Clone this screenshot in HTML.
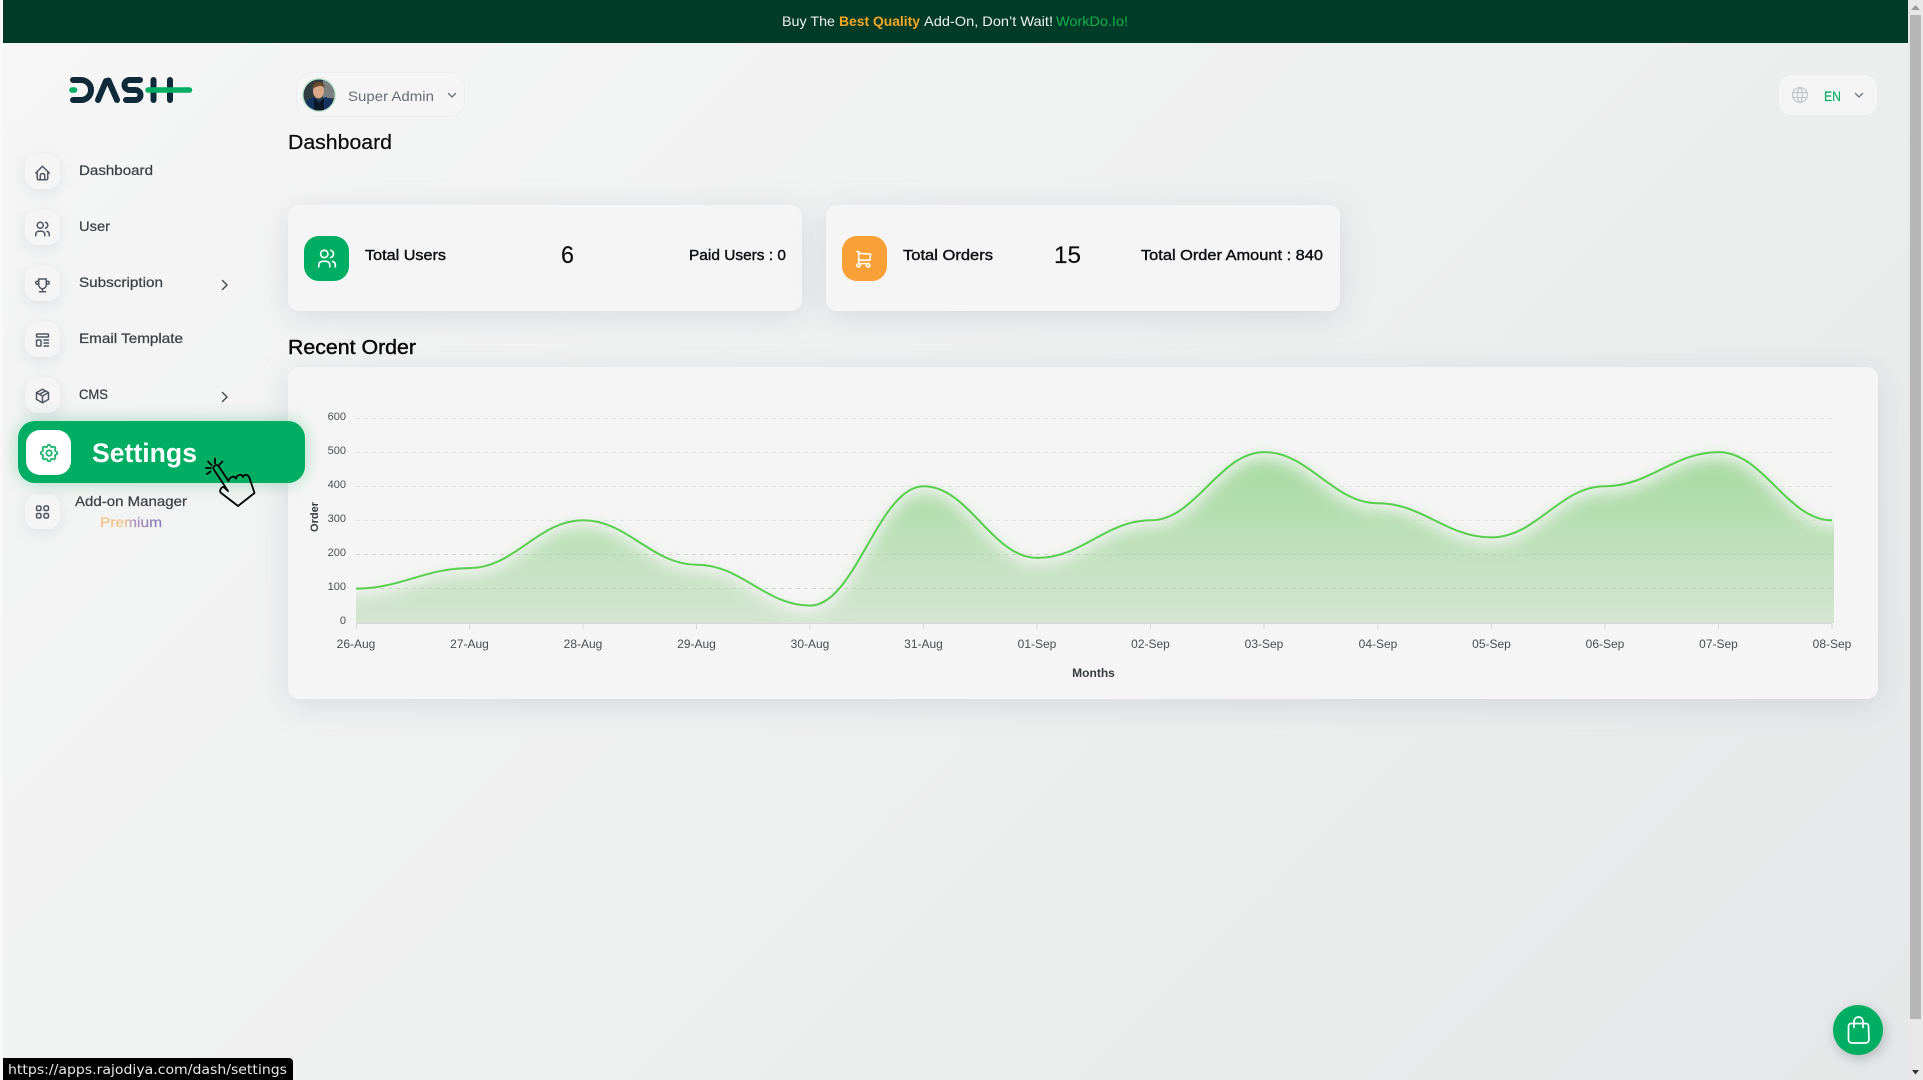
<!DOCTYPE html>
<html lang="en"><head><meta charset="utf-8"><title>Dashboard</title>
<style>
html,body{margin:0;padding:0;width:1923px;height:1080px;overflow:hidden;background:#f8f8f8;font-family:"Liberation Sans",sans-serif}
.b{position:absolute;box-sizing:border-box}
#bg{left:3px;top:0;width:1905px;height:1080px;background:linear-gradient(135deg,#f6f6f6 0%,#eeefef 55%,#e5e8e8 100%)}
#top{left:3px;top:0;width:1905px;height:43px;background:#003b28}
.ib{left:25px;width:35px;height:35px;border-radius:12px;background:#f5f5f6;box-shadow:0 4px 14px rgba(165,170,182,.25)}
.card{background:#f5f5f5;border-radius:11px;box-shadow:0 6px 30px rgba(150,156,168,.28)}
svg text{font-family:"Liberation Sans",sans-serif}
.nav{font-size:14px;fill:#3d4146;stroke:#3d4146;stroke-width:.25px}
.semi{font-size:15px;fill:#0d0f12;stroke:#0d0f12;stroke-width:.4px}
.big{font-size:24px;fill:#0a0a0a;stroke:#0a0a0a;stroke-width:.15px}
.yl{font-size:11px;fill:#4a4e50;text-anchor:end}
.xl{font-size:12px;fill:#4a4e50;text-anchor:middle}
.ic{fill:none;stroke-linecap:round;stroke-linejoin:round;stroke-width:2}
</style></head>
<body>
<div class="b" id="bg"></div>
<div class="b" id="top"></div>
<div class="b" style="left:1908px;top:0;width:15px;height:1080px;background:#e8e8e8"></div>
<div class="b" style="left:1910px;top:15px;width:11px;height:1004px;background:#b6b6b6"></div>

<div class="b ib" style="top:154px"></div>
<div class="b ib" style="top:210px"></div>
<div class="b ib" style="top:266px"></div>
<div class="b ib" style="top:322px"></div>
<div class="b ib" style="top:378px"></div>
<div class="b ib" style="top:494px"></div>

<div class="b" style="left:296px;top:72px;width:169px;height:45px;border-radius:15px;background:#f5f5f5;border:1px solid #eeeeee"></div>
<div class="b" style="left:1779px;top:75px;width:98px;height:40px;border-radius:13px;background:#f5f5f5"></div>

<div class="b card" style="left:288px;top:205px;width:514px;height:106px"></div>
<div class="b card" style="left:826px;top:205px;width:514px;height:106px"></div>
<div class="b" style="left:304px;top:236px;width:45px;height:45px;border-radius:15px;background:#00ae63"></div>
<div class="b" style="left:842px;top:236px;width:45px;height:45px;border-radius:15px;background:#f9a036"></div>
<div class="b card" style="left:288px;top:367px;width:1590px;height:332px"></div>

<div class="b" style="left:18px;top:421px;width:287px;height:62px;border-radius:17px;background:#00ae63;box-shadow:0 0 18px rgba(0,174,99,.32)"></div>
<div class="b" style="left:26px;top:430px;width:45px;height:45px;border-radius:14px;background:#fff"></div>

<div class="b" style="left:1833px;top:1005px;width:50px;height:50px;border-radius:50%;background:#00ae63;box-shadow:2px 4px 12px rgba(90,100,100,.35)"></div>
<div class="b" style="left:3px;top:1058px;width:290px;height:22px;background:#000;border-top-right-radius:4px"></div>

<svg class="b" style="left:0;top:0" width="1923" height="1080" viewBox="0 0 1923 1080" xmlns="http://www.w3.org/2000/svg">
<defs>
<linearGradient id="fg" gradientUnits="userSpaceOnUse" x1="0" y1="452" x2="0" y2="623">
<stop offset="0" stop-color="#a6daa0"/><stop offset="1" stop-color="#d6e6d3"/>
</linearGradient>
<filter id="bl" filterUnits="userSpaceOnUse" x="300" y="400" width="1600" height="300"><feGaussianBlur stdDeviation="8"/></filter>
<clipPath id="cp"><rect x="356" y="420" width="1478" height="203"/></clipPath>
<g id="i-users"><circle cx="9" cy="7" r="4"/><path d="M3 21v-2a4 4 0 0 1 4-4h4a4 4 0 0 1 4 4v2"/><path d="M16 3.13a4 4 0 0 1 0 7.75"/><path d="M21 21v-2a4 4 0 0 0-3-3.85"/></g>
<g id="i-cart"><circle cx="6" cy="19" r="2"/><circle cx="17" cy="19" r="2"/><path d="M17 17h-11v-14h-2"/><path d="M6 5l14 1l-1 7h-13"/></g>
</defs>

<!-- banner -->
<text x="782" y="26" font-size="14" fill="#f0f0f0" textLength="53" lengthAdjust="spacingAndGlyphs">Buy The</text>
<text x="839" y="26" font-size="14" font-weight="bold" fill="#f5a623" textLength="81" lengthAdjust="spacingAndGlyphs">Best Quality</text>
<text x="924" y="26" font-size="14" fill="#f0f0f0" textLength="129" lengthAdjust="spacingAndGlyphs">Add-On, Don’t Wait!</text>
<text x="1056" y="26" font-size="14" fill="#12b04c" textLength="72" lengthAdjust="spacingAndGlyphs">WorkDo.Io!</text>

<!-- scrollbar arrows -->
<path d="M1911 10l4.500-5 4.500 5z" fill="#9a9a9a"/>
<path d="M1912 1070h7l-3.500 4.500z" fill="#333"/>

<!-- logo -->
<g fill="none" stroke="#0f2b3a" stroke-width="6" stroke-linecap="round" stroke-linejoin="round">
<path d="M73 80H81a10 10 0 0 1 0 20H73"/>
<path d="M98 100L106 81"/>
<path d="M108.500 80.500L117 100"/>
<path d="M140 80H129.500a5 5 0 0 0 0 10H135.500a5 5 0 0 1 0 10H126"/>
<path d="M153.500 80V100M170 80V100"/>
</g>
<path d="M72 90H74.500M148 90H189.500" stroke="#00ae63" stroke-width="5.500" stroke-linecap="round" fill="none"/>

<!-- sidebar icons -->
<g class="ic" stroke="#4f5663" style="stroke-width:2">
<g transform="translate(33.500 164) scale(.75)"><path d="M5 12h-2l9-9l9 9h-2"/><path d="M5 12v7a2 2 0 0 0 2 2h10a2 2 0 0 0 2-2v-7"/><path d="M9 21v-6a2 2 0 0 1 2-2h2a2 2 0 0 1 2 2v6"/></g>
<g transform="translate(33.500 220) scale(.75)"><use href="#i-users"/></g>
<g transform="translate(33.500 276) scale(.75)"><path d="M8 21h8M12 17v4M7 4h10"/><path d="M17 4v8a5 5 0 0 1-10 0v-8"/><circle cx="5" cy="9" r="2"/><circle cx="19" cy="9" r="2"/></g>
<g transform="translate(33.500 331) scale(.75)"><rect x="4" y="4" width="16" height="4" rx="1"/><rect x="4" y="12" width="6" height="8" rx="1"/><path d="M14 12h6M14 16h6M14 20h6"/></g>
<g transform="translate(33.500 387) scale(.75)"><path d="M12 3l8 4.500v9l-8 4.500l-8-4.500v-9z"/><path d="M12 12l8-4.500M12 12v9M12 12l-8-4.500M16 5.250l-8 4.500"/></g>
<g transform="translate(33.500 503) scale(.75)"><rect x="4" y="4" width="6" height="6" rx="2"/><rect x="14" y="4" width="6" height="6" rx="2"/><rect x="4" y="14" width="6" height="6" rx="2"/><rect x="14" y="14" width="6" height="6" rx="2"/></g>
</g>
<g transform="translate(38 442) scale(.92)" class="ic" stroke="#22b573"><path d="M10.325 4.317c.426-1.756 2.924-1.756 3.350 0a1.724 1.724 0 0 0 2.573 1.066c1.543-.94 3.310.826 2.370 2.370a1.724 1.724 0 0 0 1.065 2.572c1.756.426 1.756 2.924 0 3.350a1.724 1.724 0 0 0-1.066 2.573c.94 1.543-.826 3.310-2.370 2.370a1.724 1.724 0 0 0-2.572 1.065c-.426 1.756-2.924 1.756-3.350 0a1.724 1.724 0 0 0-2.573-1.066c-1.543.94-3.310-.826-2.370-2.370a1.724 1.724 0 0 0-1.065-2.572c-1.756-.426-1.756-2.924 0-3.350a1.724 1.724 0 0 0 1.066-2.573c-.94-1.543.826-3.310 2.370-2.370c1 .608 2.296.07 2.572-1.065z"/><circle cx="12" cy="12" r="3"/></g>

<!-- nav labels -->
<text class="nav" x="79" y="175" textLength="74" lengthAdjust="spacingAndGlyphs">Dashboard</text>
<text class="nav" x="79" y="231" textLength="31" lengthAdjust="spacingAndGlyphs">User</text>
<text class="nav" x="79" y="287" textLength="84" lengthAdjust="spacingAndGlyphs">Subscription</text>
<text class="nav" x="79" y="343" textLength="104" lengthAdjust="spacingAndGlyphs">Email Template</text>
<text class="nav" x="79" y="399" textLength="29" lengthAdjust="spacingAndGlyphs">CMS</text>
<text class="nav" x="75" y="506" textLength="112" lengthAdjust="spacingAndGlyphs">Add-on Manager</text>
<defs><linearGradient id="pg" gradientUnits="userSpaceOnUse" x1="100" y1="0" x2="162" y2="0"><stop offset="0" stop-color="#fbbf80"/><stop offset=".4" stop-color="#f2c28c"/><stop offset=".55" stop-color="#a68fc0"/><stop offset="1" stop-color="#8a78b4"/></linearGradient></defs>
<text x="100" y="527" font-size="14" fill="url(#pg)" stroke="url(#pg)" stroke-width=".2" textLength="62" lengthAdjust="spacingAndGlyphs">Premium</text>
<path d="M222.500 280.500l4.500 4.500l-4.500 4.500M222.500 392.500l4.500 4.500l-4.500 4.500" fill="none" stroke="#3f4550" stroke-width="1.400" stroke-linecap="round" stroke-linejoin="round"/>

<text x="92" y="462" font-size="27" font-weight="bold" fill="#fff" textLength="105" lengthAdjust="spacingAndGlyphs">Settings</text>

<!-- header -->
<circle cx="319" cy="95" r="17" fill="#bfe6cf"/>
<clipPath id="av"><circle cx="319" cy="95" r="15.500"/></clipPath>
<g clip-path="url(#av)">
<rect x="300" y="78" width="38" height="36" fill="#2f3d42"/>
<rect x="323" y="78" width="15" height="20" fill="#7a8281"/>
<path d="M302 114c0-12 7-16 12-17l5 4 6-4c6 1 11 6 11 17z" fill="#14335f"/>
<path d="M314 98l5 5 5-5v14h-10z" fill="#0b1726"/>
<ellipse cx="318.500" cy="91" rx="5.500" ry="7.500" fill="#d8a888"/>
<path d="M312.500 89c0-5 3-7 6.500-7s6 2.500 6 6c-2-2.500-7-3-12.500 1z" fill="#6b4a2c"/>
</g>
<text x="348" y="101" font-size="14" fill="#666e79" textLength="86" lengthAdjust="spacingAndGlyphs">Super Admin</text>
<path d="M448.500 93.500l3.500 3.500l3.500-3.500" fill="none" stroke="#666e79" stroke-width="1.300" stroke-linecap="round" stroke-linejoin="round"/>

<g transform="translate(1790 85) scale(.83)" class="ic" stroke="#c4c6c8" style="stroke-width:1.500"><circle cx="12" cy="12" r="9"/><path d="M3.600 9h16.800M3.600 15h16.800M11.500 3a17 17 0 0 0 0 18M12.500 3a17 17 0 0 1 0 18"/></g>
<text x="1824" y="101" font-size="14" fill="#00ae63" stroke="#00ae63" stroke-width=".15" textLength="17" lengthAdjust="spacingAndGlyphs">EN</text>
<path d="M1855.500 93.500l3.500 3.500l3.500-3.500" fill="none" stroke="#6b7280" stroke-width="1.300" stroke-linecap="round" stroke-linejoin="round"/>

<text x="288" y="149" font-size="20" fill="#0a0a0a" stroke="#0a0a0a" stroke-width=".2" textLength="104" lengthAdjust="spacingAndGlyphs">Dashboard</text>
<text x="288" y="354" font-size="20" fill="#0a0a0a" stroke="#0a0a0a" stroke-width=".45" textLength="128" lengthAdjust="spacingAndGlyphs">Recent Order</text>

<!-- cards -->
<g transform="translate(316 247.500) scale(.92)" class="ic" stroke="#fff" style="stroke-width:1.800"><use href="#i-users"/></g>
<g transform="translate(853.500 249) scale(.86)" class="ic" stroke="#fff" style="stroke-width:1.800"><use href="#i-cart"/></g>
<text class="semi" x="365" y="260" textLength="81" lengthAdjust="spacingAndGlyphs">Total Users</text>
<text class="big" x="561" y="263" textLength="13" lengthAdjust="spacingAndGlyphs">6</text>
<text class="semi" x="689" y="260" textLength="97" lengthAdjust="spacingAndGlyphs">Paid Users : 0</text>
<text class="semi" x="903" y="260" textLength="90" lengthAdjust="spacingAndGlyphs">Total Orders</text>
<text class="big" x="1054" y="263" textLength="27" lengthAdjust="spacingAndGlyphs">15</text>
<text class="semi" x="1141" y="260" textLength="182" lengthAdjust="spacingAndGlyphs">Total Order Amount : 840</text>

<!-- chart -->
<g stroke="#e2e2e2" stroke-width="1" stroke-dasharray="4 4" fill="none">
<path d="M356 418.500H1832M356 452.500H1832M356 486.500H1832M356 520.500H1832M356 554.500H1832M356 588.500H1832"/>
</g>
<g clip-path="url(#cp)">
<path transform="translate(0 6)" filter="url(#bl)" fill="url(#fg)" d="M356 588.600C401 588.600 424.500 568.100 469.500 568.100C514.500 568.100 538.100 520.300 583.100 520.300C628.100 520.300 651.600 564.700 696.600 564.700C741.600 564.700 765.200 605.600 810.200 605.600C855.200 605.600 878.700 486.200 923.700 486.200C968.700 486.200 992.200 557.900 1037.200 557.900C1082.200 557.900 1105.800 520.300 1150.800 520.300C1195.800 520.300 1219.300 452.100 1264.300 452.100C1309.300 452.100 1332.900 503.300 1377.900 503.300C1422.900 503.300 1446.400 537.400 1491.400 537.400C1536.400 537.400 1559.900 486.200 1604.900 486.200C1649.900 486.200 1673.500 452.100 1718.500 452.100C1763.500 452.100 1787 520.300 1832 520.300L1870 520V670H320V588.600Z"/>
</g>
<g stroke="#000" stroke-opacity=".06" stroke-width="1" stroke-dasharray="4 4" fill="none"><path d="M356 554.500H1832M356 588.500H1832"/></g>
<path fill="none" stroke="#58cd4e" stroke-width="2" d="M356 588.600C401 588.600 424.500 568.100 469.500 568.100C514.500 568.100 538.100 520.300 583.100 520.300C628.100 520.300 651.600 564.700 696.600 564.700C741.600 564.700 765.200 605.600 810.200 605.600C855.200 605.600 878.700 486.200 923.700 486.200C968.700 486.200 992.200 557.900 1037.200 557.900C1082.200 557.900 1105.800 520.300 1150.800 520.300C1195.800 520.300 1219.300 452.100 1264.300 452.100C1309.300 452.100 1332.900 503.300 1377.900 503.300C1422.900 503.300 1446.400 537.400 1491.400 537.400C1536.400 537.400 1559.900 486.200 1604.900 486.200C1649.900 486.200 1673.500 452.100 1718.500 452.100C1763.500 452.100 1787 520.300 1832 520.300"/>
<path d="M356 623.500H1832M356.500 623V629M469.500 623V629M583 623V629M696.500 623V629M810 623V629M923.500 623V629M1037 623V629M1150.500 623V629M1264 623V629M1378 623V629M1491.500 623V629M1605 623V629M1718.500 623V629M1832 623V629" stroke="#d8d8d8" fill="none"/>
<text class="yl" x="346" y="420">600</text>
<text class="yl" x="346" y="454">500</text>
<text class="yl" x="346" y="488">400</text>
<text class="yl" x="346" y="522">300</text>
<text class="yl" x="346" y="556">200</text>
<text class="yl" x="346" y="590">100</text>
<text class="yl" x="346" y="624">0</text>
<g class="xl">
<text class="xl" x="356" y="648">26-Aug</text>
<text class="xl" x="469.500" y="648">27-Aug</text>
<text class="xl" x="583" y="648">28-Aug</text>
<text class="xl" x="696.500" y="648">29-Aug</text>
<text class="xl" x="810" y="648">30-Aug</text>
<text class="xl" x="923.500" y="648">31-Aug</text>
<text class="xl" x="1037" y="648">01-Sep</text>
<text class="xl" x="1150.500" y="648">02-Sep</text>
<text class="xl" x="1264" y="648">03-Sep</text>
<text class="xl" x="1378" y="648">04-Sep</text>
<text class="xl" x="1491.500" y="648">05-Sep</text>
<text class="xl" x="1605" y="648">06-Sep</text>
<text class="xl" x="1718.500" y="648">07-Sep</text>
<text class="xl" x="1832" y="648">08-Sep</text>
</g>
<text x="1093.500" y="677" font-size="12" font-weight="bold" fill="#373d3f" text-anchor="middle">Months</text>
<text transform="translate(318 517) rotate(-90)" font-size="11" font-weight="bold" fill="#373d3f" text-anchor="middle">Order</text>

<!-- hand cursor -->
<g fill="none" stroke="#000" stroke-width="1.800" stroke-linecap="round" stroke-linejoin="round">
<path d="M213.500 469c-1-3 3-5 5-3L228.500 481c1-4 6-6 7.500-2.500c1-3.500 5.500-5.500 7-1.500c1.500-3 5-3 6.500 1C251 483 253 488 254.500 493L238 506L220.500 492.500c-1-2 .5-5.500 3-5.500L228 491z"/>
<path d="M215 458.500v5M208 461.500l3.500 3.500M222.500 461.500l-3.500 3.500M206 468h5M207 474l3.500-2.500"/>
</g>

<!-- bag -->
<g fill="none" stroke="#fff" stroke-width="1.700" stroke-linecap="round" stroke-linejoin="round">
<path d="M1851 1023.500H1866a2.500 2.500 0 0 1 2.500 2.500L1869 1039.500a3.500 3.500 0 0 1-3.500 3.500H1852a3.500 3.500 0 0 1-3.500-3.500L1848.500 1026a2.500 2.500 0 0 1 2.500-2.500z"/>
<path d="M1854 1027.500V1021.500a4.500 4.500 0 0 1 9 0V1027.500"/>
</g>

<!-- status -->
<text x="8" y="1074" style="font-family:'DejaVu Sans',sans-serif" font-size="13" fill="#e8e8e8" textLength="279" lengthAdjust="spacingAndGlyphs">https://apps.rajodiya.com/dash/settings</text>
</svg>
</body></html>
